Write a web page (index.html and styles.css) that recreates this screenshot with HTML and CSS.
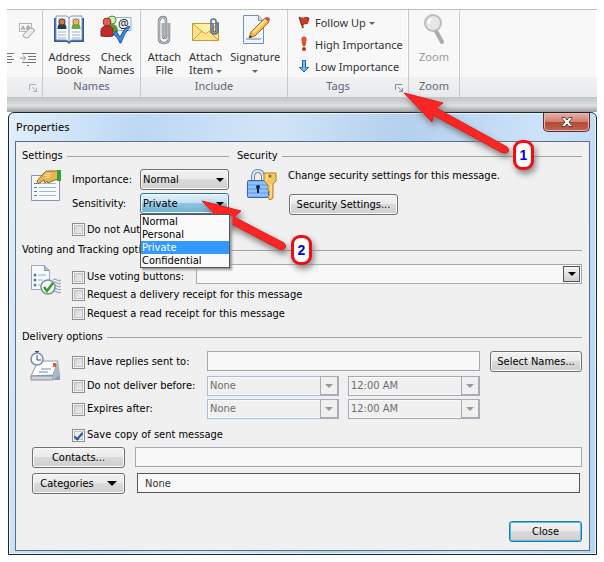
FILE: index.html
```html
<!DOCTYPE html>
<html lang="en">
<head>
<meta charset="utf-8">
<title>Message Properties</title>
<link rel="stylesheet" href="styles.css">
</head>
<body>
<main class="scene">
  <header class="ribbon">
    <section class="group group-text">
      <div class="group-body edge-tools">
        <svg class="tool-format" width="18" height="18" viewBox="0 0 18 18"><rect x="1.500" y="1.500" width="12" height="8" fill="#f7f7f7" stroke="#b4b4b4"/><path d="M3 8l2-4 2 4M4 7h2M9 8V4h1.500q1 0 1 1t-1 1H9h1.500q1.500 0 1.500 1t-1 1z" fill="none" stroke="#999"/><path d="M5 13l6-6q1-1 2-1l3 1q1 1 0 2l-5 6q-1 1-2 1l-3-1q-2-1-1-2z" fill="#ececec" stroke="#a5a5a5"/></svg>
        <svg class="tool-indent" width="31" height="14" viewBox="0 0 31 14"><path d="M0 1.500h7M0 4.500h5M0 7.500h7M0 10.500h5M15 1.500h14M21 4.500h8M21 7.500h8M15 10.500h14M20 13.500h2" stroke="#777"/><path d="M13 6h5M16 3.500l3 2.500-3 2.500" fill="none" stroke="#999"/></svg>
      </div>
      <div class="group-name"><svg class="launcher" width="9" height="9" viewBox="0 0 9 9"><path d="M.5 6V.5H7M3 3l4 4M7.500 4v3.500H4" fill="none" stroke="#b0b0b0"/></svg></div>
    </section>
    <section class="group">
      <div class="group-body">
        <button class="big-button"><svg width="32" height="32" viewBox="0 0 32 32"><path d="M1 4h14q1 1 2 0h14v24H18l-2 2-2-2H1z" fill="#355c94"/><path d="M3 2h10q2 0 3 2 1-2 3-2h10v24H19q-2 0-3 2-1-2-3-2H3z" fill="#f8fbff" stroke="#7d96b8"/><path d="M16 4v24" stroke="#7891b2"/><rect x="5" y="4" width="8" height="11" fill="#bdd9f3"/><rect x="19" y="4" width="8" height="11" fill="#c3dff4"/><path d="M4.500 15q0-6 4.500-5 4.500-1 4.500 5z" fill="#293c46"/><circle cx="9" cy="8" r="3" fill="#d07a45" stroke="#6b3a22"/><path d="M18.500 15q0-6 4.500-5 4.500-1 4.500 5z" fill="#68aa3c"/><circle cx="23" cy="8" r="3" fill="#efb55c" stroke="#b87a2c"/><path d="M5 18h8M5 21h8M5 24h8M19 18h8M19 21h8M19 24h8" stroke="#9cb3ce"/></svg><span>Address<br>Book</span></button>
        <button class="big-button"><svg width="32" height="32" viewBox="0 0 32 32"><path d="M13 3.500h18v13H13z" fill="#f7fbff" stroke="#8fa9c6"/><text class="at-sign" x="18" y="14">@</text><circle cx="12" cy="6" r="4" fill="#d5edbf" stroke="#4d8d31"/><path d="M7 18q-1-8 5-8 6 0 6 8z" fill="#519c38"/><circle cx="7" cy="8" r="4" fill="#df5f52" stroke="#963529"/><path d="M1 22V17q0-5 6-5t6 5v5q-6 1-12 0z" fill="#c62a2e" stroke="#8c1d24"/><path d="M13 20l3-3 4 6q3-7 8-11l2 1q-6 6-9 16h-1q-2-6-7-9z" fill="#3b88df" stroke="#1b58a8"/></svg><span>Check<br>Names</span></button>
      </div>
      <div class="group-name">Names</div>
    </section>
    <section class="group">
      <div class="group-body">
        <button class="big-button"><svg width="32" height="32" viewBox="0 0 32 32"><path d="M15 9v13q0 2 1.500 2t1.500-2V7q0-4-3-4t-4 4v17q0 5 5 5t5-5V9" fill="none" stroke="#747b82" stroke-width="2.500"/><path d="M15 9v13q0 2 1.500 2t1.500-2V7q0-4-3-4t-4 4v17q0 5 5 5t5-5V9" fill="none" stroke="#d5d9dd"/></svg><span>Attach<br>File</span></button>
        <button class="big-button"><svg width="32" height="32" viewBox="0 0 32 32"><path d="M2.500 9.500h26v17h-26z" fill="#fce38a" stroke="#c89938"/><path d="M3 10l11 9q2 1 3 0l11-9M3 26l9-9M28 26l-9-9" fill="#fff0ad" stroke="#d49c35"/><path d="M23 9v7q0 2 1.500 2t1.500-2V7q0-2-2.500-2T21 7v9q0 4 3.500 4t3.500-4V8" fill="none" stroke="#506b8f" stroke-width="1.500"/></svg><span>Attach<br>Item <i class="caret"></i></span></button>
        <button class="big-button"><svg width="32" height="32" viewBox="0 0 32 32"><path d="M4.500 1.500h15l5 5v23h-20z" fill="#f0f7ff" stroke="#718fb8"/><path d="M19.500 1.500v5h5" fill="#cce0f6" stroke="#718fb8"/><path d="M7 25h15" stroke="#637eb0"/><path d="M10 24l2-6L26 4l4 4-14 14z" fill="#f1b341" stroke="#a86d23"/><path d="M13 18l13-13 2 2-13 13z" fill="#ffe184"/><path d="M26 4l2-1q2 0 3 2l-1 3z" fill="#cf4f47"/><path d="M10 24l1-3 2 2z" fill="#333"/></svg><span>Signature<br><i class="caret"></i></span></button>
      </div>
      <div class="group-name">Include</div>
    </section>
    <section class="group">
      <div class="group-body tag-list">
        <button class="small-button"><svg width="16" height="16" viewBox="0 0 16 16"><path d="M3 4l3 10" stroke="#665044" stroke-width="2"/><path d="M2 3q3 2 5 1t5 0q-1 4-2 6-2-1-3 0T5 11z" fill="#d93a1e" stroke="#8f2c1b"/></svg><span>Follow Up <i class="caret"></i></span></button>
        <button class="small-button"><svg width="16" height="16" viewBox="0 0 16 16"><path d="M5 3q0-2 2-2t2 2Q9 7 7.500 10h-1Q5 7 5 3z" fill="#ee5d2e" stroke="#bd3518"/><circle cx="7" cy="13" r="2" fill="#c93018"/></svg><span>High Importance</span></button>
        <button class="small-button"><svg width="16" height="16" viewBox="0 0 16 16"><path d="M5.500 2.500h3v7h3L7 14 2.500 9.500h3z" fill="#72b4f5" stroke="#2866b7"/></svg><span>Low Importance</span></button>
      </div>
      <div class="group-name tags-name">Tags<svg class="launcher" width="9" height="9" viewBox="0 0 9 9"><path d="M.5 6V.5H7M3 3l4 4M7.500 4v3.500H4" fill="none" stroke="#8a8a8a"/></svg></div>
    </section>
    <section class="group">
      <div class="group-body">
        <button class="big-button muted"><svg width="32" height="32" viewBox="0 0 32 32"><path d="M18 17l6 11" stroke="#aaa" stroke-width="4" stroke-linecap="round"/><circle cx="15" cy="9" r="8" fill="#e7e7e7" stroke="#bdbdbd" stroke-width="2"/><path d="M9 9q1-5 6-5-3 2-3 6z" fill="#fff"/></svg><span>Zoom</span></button>
      </div>
      <div class="group-name">Zoom</div>
    </section>
    <section class="group group-rest"><div class="group-body"></div><div class="group-name"></div></section>
  </header>
  <div class="under-ribbon"></div>

  <section class="dialog" aria-labelledby="dialog-title">
    <div class="title-bar">
      <h1 id="dialog-title">Properties</h1>
      <button class="window-close" aria-label="Close window"><svg width="12" height="10" viewBox="0 0 12 10"><path d="M1 .5h3l2 2.500L8 .5h3v1L8 5l3 3.500v1H8L6 7 4 9.500H1v-1L4 5 1 1.500z" fill="#fff" stroke="#58393b"/></svg></button>
    </div>
    <form class="panel">
      <div class="top-sections">
        <section>
          <h2>Settings</h2>
          <div class="settings-grid">
            <svg class="section-icon" width="32" height="32" viewBox="0 0 32 32"><path d="M1.500 6.500h28v25h-28z" fill="#f6faff" stroke="#8097b7"/><path d="M4 14.500h3M4 18.500h3M4 22.500h3M4 26.500h3" stroke="#5878a9"/><path d="M9 14.500h17M9 18.500h17M9 22.500h17M9 26.500h17" stroke="#a3b6ce"/><path d="M7 12l6-7q3-4 7-3h8v8l-8 3-2 1-1-2-2 2-1-3-6 4z" fill="#e7b650" stroke="#936a24"/><path d="M14 6l6 1M16 4l5 1M15 9l5-1" stroke="#fae5a2"/><path d="M27 1h4v11h-4z" fill="#32a239"/></svg>
            <label for="importance">Importance:</label>
            <span class="drop"><select id="importance"><option>Normal</option></select></span>
            <label for="sensitivity">Sensitivity:</label>
            <div class="drop drop-open"><select id="sensitivity"><option>Private</option></select>
              <ul class="drop-list"><li>Normal</li><li>Personal</li><li class="chosen">Private</li><li>Confidential</li></ul>
            </div>
            <label class="check archive"><input type="checkbox">Do not Aut</label>
          </div>
        </section>
        <section>
          <h2>Security</h2>
          <div class="security">
            <svg width="32" height="32" viewBox="0 0 32 32"><path d="M6 13V8q0-6 5-6t5 6v5" fill="none" stroke="#6f89ad" stroke-width="4"/><path d="M6 13V8q0-6 5-6t5 6v5" fill="none" stroke="#dce8f5" stroke-width="2"/><rect x=".5" y="11.500" width="21" height="17" rx="1" fill="#71adf8" stroke="#3767b2"/><path d="M1 14h20M1 18h20M1 22h20M1 26h20" stroke="#b5d6ff"/><circle cx="11" cy="18" r="2" fill="#17243c"/><path d="M11 18v6" stroke="#17243c" stroke-width="2"/><path d="M17 4h12v8l-3 3v14l-3 2-2-2v-2l2-1v-3l-2-1v-6l-4-4z" fill="#f1c861" stroke="#b47b26"/><path d="M20 5v6M24 15v13" stroke="#fff0ae"/><circle cx="23" cy="7" r="1.500" fill="#8d6930"/></svg>
            <div><p>Change security settings for this message.</p><button type="button" class="button wide">Security Settings...</button></div>
          </div>
        </section>
      </div>

      <section>
        <h2>Voting and Tracking opti</h2>
        <div class="option-block">
          <svg width="32" height="32" viewBox="0 0 32 32"><path d="M1.500 1.500h13l5 5v19h-18z" fill="#f5f9fd" stroke="#9aaabd"/><path d="M14.500 1.500v5h5" fill="#a7bdd3" stroke="#8199b3"/><g fill="#587eaf"><circle cx="5" cy="11" r="1.500"/><circle cx="5" cy="16" r="1.500"/><circle cx="5" cy="21" r="1.500"/></g><path d="M8 11h8M8 16h5M8 21h3" stroke="#9ab0c9"/><path d="M23 16q2-2 4 0t4 0M23 19q2-2 4 0t4 0M23 22q2-2 4 0t4 0M23 25q2-2 4 0t4 0M23 28q2-2 4 0t4 0" fill="none" stroke="#8596ac"/><circle cx="18" cy="23" r="7" fill="#f7faf8" stroke="#7990a4" stroke-width="1.500"/><path d="M14 23l3 4 6-8" fill="none" stroke="#389b25" stroke-width="2.500"/></svg>
          <div class="rows">
            <div class="row"><label class="check"><input type="checkbox">Use voting buttons:</label><span class="drop combo"><select aria-label="Voting buttons"><option></option></select></span></div>
            <label class="check line"><input type="checkbox">Request a delivery receipt for this message</label>
            <label class="check line"><input type="checkbox">Request a read receipt for this message</label>
          </div>
        </div>
      </section>

      <section>
        <h2>Delivery options</h2>
        <div class="option-block">
          <svg width="32" height="32" viewBox="0 0 32 32"><path d="M1 26l6-14h21l2 13v4H1z" fill="#8d9dad"/><path d="M1 25l7-15h20l-5 14z" fill="#fff" stroke="#8a9bb0"/><path d="M1 25h22v4H1z" fill="#cbd2da" stroke="#8793a1"/><path d="M23 24l5-14 2 14-7 5z" fill="#aab7c4"/><path d="M23 12h3v4h-3z" fill="#e35734"/><path d="M11 18h10M9 21h9" stroke="#668bb9"/><circle cx="7" cy="8" r="6" fill="#f8fcff" stroke="#788da5" stroke-width="1.500"/><path d="M7 4v5h4M5 .5h4M7 0v2" fill="none" stroke="#344d68"/></svg>
          <div class="delivery-grid">
            <label class="check"><input type="checkbox">Have replies sent to:</label>
            <input class="field span-two" type="text" aria-label="Reply recipients">
            <button type="button" class="button select-names">Select Names...</button>
            <label class="check"><input type="checkbox">Do not deliver before:</label>
            <span class="drop combo off date"><select aria-label="Delivery date" disabled><option>None</option></select></span>
            <span class="drop combo off time"><select aria-label="Delivery time" disabled><option>12:00 AM</option></select></span>
            <label class="check"><input type="checkbox">Expires after:</label>
            <span class="drop combo off date"><select aria-label="Expiry date" disabled><option>None</option></select></span>
            <span class="drop combo off time"><select aria-label="Expiry time" disabled><option>12:00 AM</option></select></span>
          </div>
        </div>
        <label class="check save"><input type="checkbox" checked>Save copy of sent message</label>
        <div class="links">
          <button type="button" class="button">Contacts...</button>
          <input class="field" type="text" aria-label="Contacts">
          <button type="button" class="button categories">Cate<u>g</u>ories <i class="caret black"></i></button>
          <input class="field category-field" type="text" value="None" aria-label="Categories">
        </div>
      </section>
      <footer><button type="button" class="button close">Close</button></footer>
    </form>
  </section>

  <svg class="pointer pointer-one" width="120" height="80" viewBox="0 0 120 80" aria-hidden="true"><path d="M4 3L43 13L36 18L107 57Q110 60 108 62Q105 64 101 62L33 25L32 32Z"/></svg>
  <span class="step step-one">1</span>
  <svg class="pointer pointer-two" width="100" height="70" viewBox="0 0 100 70" aria-hidden="true"><path d="M2 1L41 11L34 17L84 43Q87 46 85 48Q83 51 79 49L30 23L30 30Z"/></svg>
  <span class="step step-two">2</span>
</main>
</body>
</html>
```
FILE: styles.css
```css
*, *::before, *::after { box-sizing: border-box; }
body { margin: 0; background: #fff; color: #000; font: 11px/14px "DejaVu Sans Condensed", "Noto Sans", sans-serif; }
button, input, select { margin: 0; font: inherit; color: inherit; }
h1, h2, p, ul { margin: 0; padding: 0; font-weight: normal; }
svg { display: block; flex: none; }
.scene { position: relative; padding: 9px 7px 6px; overflow: hidden; }

/* Ribbon */
.ribbon { display: grid; grid-template-columns: 36px 98px 147px 121px 51px 1fr; height: 87px; border-top: 1px solid #b9bec2; border-bottom: 1px solid #8b9097; background: #f8f8f8; color: #333; font: 11px/13px "Noto Sans", sans-serif; }
.group { display: flex; flex-direction: column; border-right: 1px solid #c5c9cc; box-shadow: inset -1px 0 #fff; }
.group-rest { border: 0; }
.group-body { flex: 1; display: flex; justify-content: center; padding-top: 4px; }
.group-name { position: relative; height: 20px; padding-top: 2px; background: linear-gradient(#f0f1f2, #e8eaeb); color: #5d6575; text-align: center; line-height: 14px; }
.tags-name { padding-right: 20px; }
.launcher { position: absolute; right: 4px; top: 7px; }
.edge-tools { flex-direction: column; justify-content: flex-start; gap: 12px; padding-top: 12px; }
.tool-format { align-self: flex-end; margin-right: 6px; }
.big-button { display: flex; flex-direction: column; align-items: center; gap: 4px; padding: 0 4px; border: 0; background: none; text-align: center; }
.big-button.muted { color: #999; }
.small-button { display: flex; align-items: center; gap: 2px; height: 22px; padding: 0; border: 0; background: none; white-space: nowrap; }
.tag-list { flex-direction: column; justify-content: flex-start; padding: 1px 0 0 9px; }
.caret { display: inline-block; vertical-align: middle; border: 3px solid transparent; border-top-color: #666; border-bottom: 0; }
.caret.black { border-width: 5px 5px 0; border-top-color: #000; margin-left: 13px; }
.at-sign { font: 12px "Noto Sans", sans-serif; fill: #111; }
.under-ribbon { height: 16px; background: linear-gradient(#bcc0c2, #dce0e0 60%, #999e9f); }

/* Dialog frame */
.dialog { margin-left: 1px; padding: 0 6px 3px; border: 1px solid #17262e; border-radius: 6px 6px 0 0; background: linear-gradient(100deg, #e2effb, #bcd8f3 20%, #d2e5f7 40%, #b3d0ed 60%, #cce2f8 80%, #b5d5f5); box-shadow: inset 0 0 0 1px #e9f5ff; }
.title-bar { display: flex; justify-content: space-between; height: 28px; padding-left: 1px; }
h1 { padding-top: 6px; font: 11px/16px "Noto Sans", sans-serif; }
.window-close { display: grid; place-items: center; width: 47px; height: 19px; padding: 0; border: 1px solid #592c31; border-top: 0; border-radius: 0 0 5px 5px; background: linear-gradient(#e8b1a6, #d18071 48%, #b74734 50%, #ba6654); box-shadow: inset 0 0 0 1px #e9b6ad; }
.panel { padding: 7px 7px 8px 6px; border: 1px solid #586f86; background: #f0f0f0; }
h2 { display: flex; align-items: center; gap: 4px; height: 14px; font-size: 11px; white-space: nowrap; }
h2::after { content: ""; flex: 1; height: 1px; background: #a3a3a3; }

/* Controls */
.check { display: flex; align-items: center; gap: 2px; white-space: nowrap; }
.check input { appearance: none; flex: none; width: 13px; height: 13px; border: 1px solid #8e8f8f; background: linear-gradient(135deg, #c9ced3, #f5f5f5); box-shadow: inset 0 0 0 1px #f5f5f5, inset 0 0 0 2px #bcc0c4; }
.check input:checked { background: #e9eff8; display: grid; place-items: center; }
.check input:checked::before { content: ""; width: 5px; height: 9px; border: solid #294f96; border-width: 0 2px 2px 0; transform: rotate(40deg); }
.button { height: 21px; padding: 0 4px; border: 1px solid #707070; border-radius: 3px; background: linear-gradient(#f2f2f2, #ebebeb 48%, #dadada 50%, #cfcfcf); box-shadow: inset 0 0 0 1px #fafafa; line-height: 17px; white-space: nowrap; }
.drop { position: relative; display: block; min-width: 0; }
.drop select { appearance: none; display: block; width: 100%; height: 21px; padding: 0 2px; border: 1px solid #707070; border-radius: 3px; background: linear-gradient(#f2f2f2, #ebebeb 48%, #dadada 50%, #cfcfcf); box-shadow: inset 0 0 0 1px #fafafa; }
.drop::after { content: ""; position: absolute; top: 9px; right: 5px; border: 4px solid transparent; border-top-color: #000; border-bottom: 0; pointer-events: none; }
.drop-open select { border-color: #31739b; background: linear-gradient(#e2f1fa, #c1dff0 48%, #95c5e1 50%, #70aed3); }
.drop-list { position: absolute; z-index: 1; top: 21px; left: 0; width: 90px; border: 1px solid #555; background: #fafafa; box-shadow: 2px 2px 2px #999; line-height: 13px; list-style: none; }
.drop-list li { padding: 0 1px; }
.drop-list .chosen { background: #3399ff; color: #fff; }
.combo select { height: 20px; border-color: #a4a7b0; border-radius: 0; background: #f8f8f8; }
.combo::before { content: ""; position: absolute; top: 2px; right: 2px; width: 17px; height: 16px; border: 1px solid #555; background: linear-gradient(#f2f2f2, #d0d0d0); pointer-events: none; }
.combo::after { top: 8px; right: 6px; }
.off select { background: #f0f0f0; color: #6d6d6d; opacity: 1; }
.off::before { top: 0; right: 0; width: 19px; height: 20px; border: 1px solid #a9acb5; box-shadow: inset -1px -1px #a9acb5; background: #f0f0f0; }
.off::after { border-top-color: #999; }
.date select { border-color: #a9bddb; }
.field { width: 100%; min-width: 0; height: 20px; padding: 0 7px; border: 1px solid #a6a8b0; background: #f8f8f8; }

/* Dialog sections */
.top-sections { display: grid; grid-template-columns: 207px 1fr; gap: 8px; height: 94px; }
.settings-grid { display: grid; grid-template-columns: 50px 68px 89px; grid-template-rows: 21px 21px 25px; row-gap: 3px; align-items: center; padding-top: 6px; }
.section-icon { grid-row: 1 / 3; align-self: start; margin-left: 8px; }
.archive { grid-column: 2; }
.security { display: flex; gap: 9px; padding: 6px 0 0 10px; }
.security p { height: 25px; }
.wide { width: 109px; margin-left: 1px; }
.option-block { display: grid; grid-template-columns: 32px 1fr; gap: 10px; padding: 7px 0 0 8px; }
.row { display: grid; grid-template-columns: 124px 1fr; align-items: end; margin-bottom: 1px; }
.line { height: 19px; }
.rows { display: grid; padding-bottom: 7px; }
.delivery-grid { display: grid; grid-template-columns: 135px 132px 132px 1fr; row-gap: 3px; }
.delivery-grid .check { grid-column: 1; }
.time { margin-left: 9px; margin-right: -9px; }
.span-two { grid-column: 2 / 4; width: calc(100% + 9px); }
.select-names { grid-row: 1; grid-column: 4; margin-left: 19px; margin-bottom: 1px; }
.save { height: 28px; margin-left: 50px; padding-top: 4px; }
.links { display: grid; grid-template-columns: 93px 1fr; gap: 5px 10px; padding-left: 10px; }
.categories { display: flex; align-items: center; justify-content: center; }
.category-field { width: auto; margin: 0 2px; border-color: #555; color: #333; }
footer { display: flex; justify-content: flex-end; padding-top: 27px; }
.close { width: 73px; border-color: #2f74a5; box-shadow: inset 0 0 0 1px #43c5f4; }

/* Callouts laid over the dialog */
.pointer { position: absolute; fill: #fb2524; stroke: #e3191b; overflow: visible; filter: drop-shadow(2px 4px 3px #777); pointer-events: none; }
.pointer-one { left: 400px; top: 90px; }
.pointer-two { left: 200px; top: 200px; }
.step { position: absolute; display: grid; place-items: center; width: 21px; height: 30px; border: 3px solid #f20d12; border-radius: 9px; background: #fff; box-shadow: 2px 4px 6px #888; color: #0000e0; font: 700 14px/20px "Liberation Sans", sans-serif; }
.step-one { left: 513px; top: 140px; }
.step-two { left: 291px; top: 235px; }
```
